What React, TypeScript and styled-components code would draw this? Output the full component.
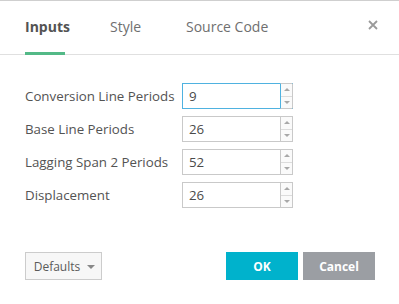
import React, { useState } from 'react'
import styled, { createGlobalStyle } from 'styled-components'

const GlobalStyle = createGlobalStyle`
  html, body {
    margin: 0;
    padding: 0;
    background: #ffffff;
  }
  body {
    font-family: 'Open Sans', 'Liberation Sans', sans-serif;
  }
`

const Dialog = styled.div`
  width: 399px;
  height: 304px;
  box-sizing: border-box;
  border-top: 1px solid #cfcfcf;
  background: #fff;
  display: flex;
  flex-direction: column;
`

const Header = styled.div`
  height: 54px;
  box-sizing: border-box;
  border-bottom: 1px solid #e0e0e0;
  display: flex;
  align-items: stretch;
  padding: 0 21px 0 25px;
`

const Tabs = styled.div`
  display: flex;
  flex: 1;
`

const Tab = styled.div<{ active?: boolean; w: number }>`
  display: flex;
  align-items: center;
  width: ${p => p.w}px;
  font-size: 14px;
  font-weight: ${p => (p.active ? 700 : 400)};
  color: ${p => (p.active ? '#535353' : '#6f6f6f')};
  position: relative;
  padding-bottom: 2px;
  cursor: pointer;
  white-space: nowrap;

  &::after {
    content: '';
    position: absolute;
    left: 0;
    width: 40px;
    bottom: -1px;
    height: 3px;
    background: ${p => (p.active ? '#53b987' : 'transparent')};
  }
`

const Close = styled.button`
  border: none;
  background: none;
  padding: 0;
  margin-top: 19px;
  width: 10px;
  height: 10px;
  cursor: pointer;
  display: flex;
`

const Body = styled.div`
  padding: 28px 0 0 25px;
  display: grid;
  grid-template-columns: 157px 111px;
  row-gap: 7px;
  align-items: center;
`

const Label = styled.label`
  font-size: 13.3px;
  color: #535353;
  white-space: nowrap;
`

const Spin = styled.div<{ focused?: boolean }>`
  display: flex;
  height: 26px;
  box-sizing: border-box;
  border: 1px solid ${p => (p.focused ? '#4fb2e0' : '#c9c9c9')};
  border-right-color: #c9c9c9;
`

const Field = styled.input`
  flex: 1;
  min-width: 0;
  border: none;
  outline: none;
  padding: 0 0 0 6px;
  font-family: inherit;
  font-size: 13.3px;
  color: #4a4a4a;
  background: transparent;
`

const Arrows = styled.div<{ focused?: boolean }>`
  width: 11px;
  display: flex;
  flex-direction: column;
  border-left: 1px solid ${p => (p.focused ? '#4fb2e0' : '#c9c9c9')};
  margin-top: -1px;
  margin-bottom: -1px;
  border-top: 1px solid #c9c9c9;
  border-bottom: 1px solid #c9c9c9;
  background: #fafafa;
`

const Arrow = styled.div<{ down?: boolean }>`
  flex: 1;
  display: flex;
  align-items: center;
  justify-content: center;
  border-top: ${p => (p.down ? '1px solid #dcdcdc' : 'none')};

  &::before {
    content: '';
    border-left: 3px solid transparent;
    border-right: 3px solid transparent;
    ${p => (p.down ? 'border-top: 3px solid #a8a8a8;' : 'border-bottom: 3px solid #a8a8a8;')}
  }
`

const Footer = styled.div`
  margin-top: 44px;
  display: flex;
  align-items: center;
  gap: 5px;
  padding: 0 24px 0 25px;
`

const Defaults = styled.button`
  width: 77px;
  height: 28px;
  box-sizing: border-box;
  border: 1px solid #cccccc;
  background: #f7f7f7;
  color: #5a5a5a;
  font-family: inherit;
  font-size: 12px;
  display: flex;
  align-items: center;
  justify-content: center;
  gap: 7px;
  margin-right: auto;
  padding: 0 0 0 2px;

  &::after {
    content: '';
    border-left: 4px solid transparent;
    border-right: 4px solid transparent;
    border-top: 4px solid #888;
    margin-top: 1px;
  }
`

const Action = styled.button<{ primary?: boolean }>`
  width: 72px;
  height: 28px;
  border: none;
  background: ${p => (p.primary ? '#00b2cc' : '#9b9ea3')};
  color: #fff;
  font-family: inherit;
  font-size: 12px;
  font-weight: 700;
  cursor: pointer;
`

const inputs = [
  { label: 'Conversion Line Periods', value: '9' },
  { label: 'Base Line Periods', value: '26' },
  { label: 'Lagging Span 2 Periods', value: '52' },
  { label: 'Displacement', value: '26' },
]

export default function App() {
  const [values, setValues] = useState(inputs.map(i => i.value))

  return (
    <>
      <GlobalStyle />
      <Dialog>
        <Header>
          <Tabs>
            <Tab active w={85}>Inputs</Tab>
            <Tab w={76}>Style</Tab>
            <Tab w={90}>Source Code</Tab>
          </Tabs>
          <Close aria-label="Close">
            <svg width="10" height="10" viewBox="0 0 10 10">
              <path d="M1 1L9 9M9 1L1 9" stroke="#9a9a9a" strokeWidth="1.8" />
            </svg>
          </Close>
        </Header>
        <Body>
          {inputs.map((item, i) => (
            <React.Fragment key={item.label}>
              <Label>{item.label}</Label>
              <Spin focused={i === 0}>
                <Field
                  value={values[i]}
                  onChange={e => {
                    const next = [...values]
                    next[i] = e.target.value
                    setValues(next)
                  }}
                />
                <Arrows focused={i === 0}>
                  <Arrow />
                  <Arrow down />
                </Arrows>
              </Spin>
            </React.Fragment>
          ))}
        </Body>
        <Footer>
          <Defaults>Defaults</Defaults>
          <Action primary>OK</Action>
          <Action>Cancel</Action>
        </Footer>
      </Dialog>
    </>
  )
}
